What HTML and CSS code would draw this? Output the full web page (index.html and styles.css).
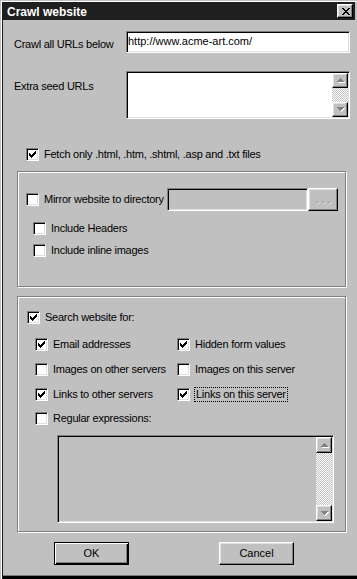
FILE: index.html
```html
<!DOCTYPE html>
<html>
<head>
<meta charset="utf-8">
<title>Crawl website</title>
<link rel="stylesheet" href="styles.css">
</head>
<body>
<div class="window">
  <div class="titlebar">
    <span class="title">Crawl website</span>
    <span class="close-btn raised"><svg width="8" height="7" viewBox="0 0 8 7" shape-rendering="crispEdges"><path d="M0 0h2v1h-2zM6 0h2v1h-2zM1 1h2v1h-2zM5 1h2v1h-2zM2 2h4v1h-4zM3 3h2v1h-2zM2 4h4v1h-4zM1 5h2v1h-2zM5 5h2v1h-2zM0 6h2v1h-2zM6 6h2v1h-2z" fill="#000"/></svg></span>
  </div>

  <div class="row url-row">
    <span class="lbl url-lbl">Crawl all URLs below</span>
    <div class="field sunken">http://www.acme-art.com/</div>
  </div>

  <div class="row seed-row">
    <span class="lbl seed-lbl">Extra seed URLs</span>
    <div class="textarea sunken">
      <div class="scrollbar sb-small">
        <span class="sb-btn raised"><svg width="8" height="5" viewBox="0 0 8 5" shape-rendering="crispEdges"><path d="M4 1h1v1h-1zM3 2h3v1h-3zM2 3h5v1h-5zM1 4h7v1h-7z" fill="#fff"/><path d="M3 0h1v1h-1zM2 1h3v1h-3zM1 2h5v1h-5zM0 3h7v1h-7z" fill="#808080"/></svg></span>
        <span class="sb-track"></span>
        <span class="sb-btn raised"><svg width="8" height="5" viewBox="0 0 8 5" shape-rendering="crispEdges"><path d="M1 1h7v1h-7zM2 2h5v1h-5zM3 3h3v1h-3zM4 4h1v1h-1z" fill="#fff"/><path d="M0 0h7v1h-7zM1 1h5v1h-5zM2 2h3v1h-3zM3 3h1v1h-1z" fill="#808080"/></svg></span>
      </div>
    </div>
  </div>

  <div class="check fetch">
    <span class="box"><svg width="9" height="9" viewBox="0 0 9 9" shape-rendering="crispEdges"><path d="M7 1h1v1h-1zM6 2h2v1h-2zM1 3h1v1h-1zM5 3h3v1h-3zM1 4h2v1h-2zM4 4h3v1h-3zM1 5h5v1h-5zM2 6h3v1h-3zM3 7h1v1h-1z" fill="#000"/></svg></span>
    <span class="txt">Fetch only .html, .htm, .shtml, .asp and .txt files</span>
  </div>

  <div class="group group-mirror">
    <div class="mirror-row">
      <div class="check">
        <span class="box"></span>
        <span class="txt">Mirror website to directory</span>
      </div>
      <div class="dir-field sunken"></div>
      <div class="browse raised"><span class="dots">...</span></div>
    </div>
    <div class="check sub headers">
      <span class="box"></span>
      <span class="txt">Include Headers</span>
    </div>
    <div class="check sub inline-img">
      <span class="box"></span>
      <span class="txt">Include inline images</span>
    </div>
  </div>

  <div class="group group-search">
    <div class="check">
      <span class="box"><svg width="9" height="9" viewBox="0 0 9 9" shape-rendering="crispEdges"><path d="M7 1h1v1h-1zM6 2h2v1h-2zM1 3h1v1h-1zM5 3h3v1h-3zM1 4h2v1h-2zM4 4h3v1h-3zM1 5h5v1h-5zM2 6h3v1h-3zM3 7h1v1h-1z" fill="#000"/></svg></span>
      <span class="txt">Search website for:</span>
    </div>
    <div class="options">
      <div class="check">
        <span class="box"><svg width="9" height="9" viewBox="0 0 9 9" shape-rendering="crispEdges"><path d="M7 1h1v1h-1zM6 2h2v1h-2zM1 3h1v1h-1zM5 3h3v1h-3zM1 4h2v1h-2zM4 4h3v1h-3zM1 5h5v1h-5zM2 6h3v1h-3zM3 7h1v1h-1z" fill="#000"/></svg></span>
        <span class="txt">Email addresses</span>
      </div>
      <div class="check">
        <span class="box"><svg width="9" height="9" viewBox="0 0 9 9" shape-rendering="crispEdges"><path d="M7 1h1v1h-1zM6 2h2v1h-2zM1 3h1v1h-1zM5 3h3v1h-3zM1 4h2v1h-2zM4 4h3v1h-3zM1 5h5v1h-5zM2 6h3v1h-3zM3 7h1v1h-1z" fill="#000"/></svg></span>
        <span class="txt">Hidden form values</span>
      </div>
      <div class="check">
        <span class="box"></span>
        <span class="txt">Images on other servers</span>
      </div>
      <div class="check">
        <span class="box"></span>
        <span class="txt">Images on this server</span>
      </div>
      <div class="check">
        <span class="box"><svg width="9" height="9" viewBox="0 0 9 9" shape-rendering="crispEdges"><path d="M7 1h1v1h-1zM6 2h2v1h-2zM1 3h1v1h-1zM5 3h3v1h-3zM1 4h2v1h-2zM4 4h3v1h-3zM1 5h5v1h-5zM2 6h3v1h-3zM3 7h1v1h-1z" fill="#000"/></svg></span>
        <span class="txt">Links to other servers</span>
      </div>
      <div class="check focused">
        <span class="box"><svg width="9" height="9" viewBox="0 0 9 9" shape-rendering="crispEdges"><path d="M7 1h1v1h-1zM6 2h2v1h-2zM1 3h1v1h-1zM5 3h3v1h-3zM1 4h2v1h-2zM4 4h3v1h-3zM1 5h5v1h-5zM2 6h3v1h-3zM3 7h1v1h-1z" fill="#000"/></svg></span>
        <span class="txt focus">Links on this server</span>
      </div>
    </div>
    <div class="check regex">
      <span class="box"></span>
      <span class="txt">Regular expressions:</span>
    </div>
    <div class="regex-area sunken">
      <div class="scrollbar">
        <span class="sb-btn raised"><svg width="8" height="5" viewBox="0 0 8 5" shape-rendering="crispEdges"><path d="M4 1h1v1h-1zM3 2h3v1h-3zM2 3h5v1h-5zM1 4h7v1h-7z" fill="#fff"/><path d="M3 0h1v1h-1zM2 1h3v1h-3zM1 2h5v1h-5zM0 3h7v1h-7z" fill="#808080"/></svg></span>
        <span class="sb-track"></span>
        <span class="sb-btn raised"><svg width="8" height="5" viewBox="0 0 8 5" shape-rendering="crispEdges"><path d="M1 1h7v1h-7zM2 2h5v1h-5zM3 3h3v1h-3zM4 4h1v1h-1z" fill="#fff"/><path d="M0 0h7v1h-7zM1 1h5v1h-5zM2 2h3v1h-3zM3 3h1v1h-1z" fill="#808080"/></svg></span>
      </div>
    </div>
  </div>

  <div class="buttons">
    <div class="btn default">OK</div>
    <div class="btn raised">Cancel</div>
  </div>
</div>
</body>
</html>
```

FILE: styles.css
```css
* {
  box-sizing: border-box;
}

html, body {
  margin: 0;
  padding: 0;
  background: #c0c0c0;
}

body {
  font-family: "Liberation Sans", Arial, sans-serif;
  font-size: 11px;
  line-height: 13px;
  letter-spacing: -0.25px;
  color: #000;
}

.window {
  width: 357px;
  height: 579px;
  padding: 2px 2px 0 3px;
  background: #c0c0c0;
  box-shadow:
    inset 1px 1px 0 #c0c0c0,
    inset 2px 2px 0 #fff,
    inset 3px 0 0 #1a1a1a,
    inset 0 -3px 0 #000,
    inset 0 -4px 0 #808080;
  overflow: hidden;
}

/* ---------- title bar ---------- */
.titlebar {
  height: 18px;
  background: #1f1f1f;
  display: flex;
  align-items: center;
  justify-content: space-between;
  padding: 0 2px 0 4px;
}

.title {
  color: #fff;
  font-weight: bold;
  font-size: 12px;
  letter-spacing: 0;
  line-height: 18px;
  padding-top: 1px;
}

.close-btn {
  width: 16px;
  height: 14px;
  background: #c0c0c0;
  display: flex;
  align-items: center;
  justify-content: center;
  padding-left: 1px;
}

/* ---------- bevels ---------- */
.raised {
  background: #c0c0c0;
  border: 1px solid;
  border-color: #fff #000 #000 #fff;
  box-shadow: inset -1px -1px 0 #808080, inset 1px 1px 0 #dfdfdf;
}

.sunken {
  border: 1px solid;
  border-color: #808080 #fff #fff #808080;
  box-shadow: inset 1px 1px 0 #000, inset -1px -1px 0 #dfdfdf;
}

/* ---------- top rows ---------- */
.row {
  display: flex;
  align-items: flex-start;
  margin-left: 11px;
}

.lbl {
  width: 112px;
  flex: none;
}

.url-row {
  margin-top: 11px;
  height: 22px;
}

.url-lbl {
  margin-top: 7px;
}

.field {
  width: 224px;
  height: 22px;
  background: #fff;
  padding: 3px 1px;
  letter-spacing: 0;
  white-space: nowrap;
}

.seed-row {
  margin-top: 18px;
  height: 48px;
}

.seed-lbl {
  margin-top: 9px;
}

.textarea {
  width: 224px;
  height: 48px;
  background: #fff;
  padding: 1px;
  display: flex;
  justify-content: flex-end;
}

/* ---------- scrollbars ---------- */
.scrollbar {
  width: 16px;
  display: flex;
  flex-direction: column;
}

.sb-btn {
  height: 16px;
  flex: none;
  display: flex;
  align-items: center;
  justify-content: center;
  padding-left: 1px;
}

.sb-small .sb-btn {
  height: 15px;
}

.sb-track {
  flex: 1;
  background: repeating-conic-gradient(#fff 0 25%, #c0c0c0 0 50%) 0 0 / 2px 2px;
}

/* ---------- checkboxes ---------- */
.check {
  display: flex;
  align-items: center;
  gap: 5px;
  height: 13px;
  white-space: nowrap;
}

.box {
  width: 13px;
  height: 13px;
  flex: none;
  background: #fff;
  border: 1px solid;
  border-color: #808080 #fff #fff #808080;
  box-shadow: inset 1px 1px 0 #000, inset -1px -1px 0 #dfdfdf;
  display: flex;
  align-items: center;
  justify-content: center;
}

.fetch {
  margin-top: 29px;
  margin-left: 23px;
}

/* ---------- group boxes ---------- */
.group {
  margin-left: 14px;
  width: 329px;
  border: 1px solid #808080;
  box-shadow: inset 1px 1px 0 #fff, 1px 1px 0 #fff;
}

.group-mirror {
  margin-top: 10px;
  height: 116px;
  padding: 16px 7px 0 8px;
}

.mirror-row {
  display: flex;
  align-items: center;
  height: 23px;
}

.dir-field {
  flex: 1;
  height: 23px;
  margin-left: 3px;
  background: #c0c0c0;
}

.browse {
  width: 30px;
  height: 23px;
  flex: none;
  display: flex;
  align-items: center;
  justify-content: center;
}

.dots {
  color: #808080;
  text-shadow: 1px 1px 0 #fff;
  letter-spacing: 3px;
  margin-left: 3px;
  margin-top: -1px;
}

.sub {
  margin-left: 7px;
}

.headers {
  margin-top: 11px;
}

.inline-img {
  margin-top: 9px;
}

.group-search {
  margin-top: 9px;
  height: 236px;
  padding: 14px 0 0 9px;
}

.options {
  margin-top: 14px;
  margin-left: 8px;
  display: grid;
  grid-template-columns: 142px auto;
  row-gap: 12px;
}

.focused {
  gap: 4px;
}

.focus {
  border: 1px dotted #000;
  padding: 0 1px;
}

.regex {
  margin-top: 11px;
  margin-left: 8px;
}

.regex-area {
  margin-top: 10px;
  margin-left: 30px;
  width: 277px;
  height: 88px;
  background: #c0c0c0;
  padding: 1px;
  display: flex;
  justify-content: flex-end;
}

/* ---------- buttons ---------- */
.buttons {
  display: flex;
  gap: 90px;
  margin-top: 10px;
  margin-left: 51px;
}

.btn {
  width: 75px;
  height: 23px;
  display: flex;
  align-items: center;
  justify-content: center;
  letter-spacing: 0;
  padding-bottom: 1px;
}

.btn.default {
  background: #c0c0c0;
  border: 1px solid #000;
  box-shadow: inset 1px 1px 0 #fff, inset -1px -1px 0 #000, inset -2px -2px 0 #808080;
}
```
